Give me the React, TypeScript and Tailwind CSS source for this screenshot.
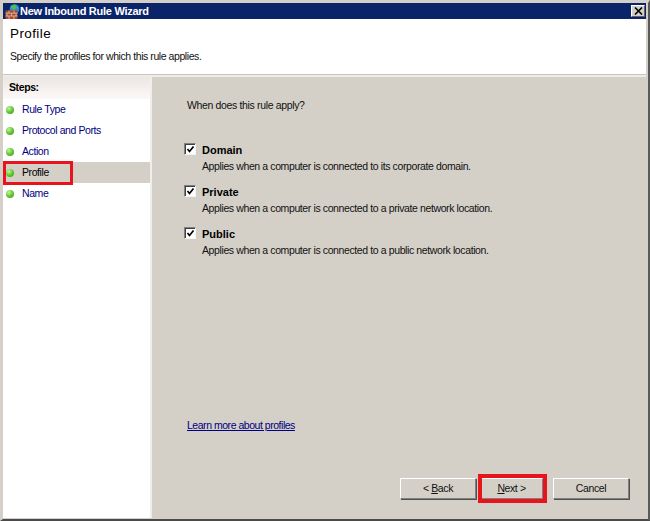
import type { ReactNode } from 'react'

const font = { fontFamily: '"Liberation Sans", Arial, sans-serif' }

const steps = ['Rule Type', 'Protocol and Ports', 'Action', 'Profile', 'Name']

const profiles = [
  { name: 'Domain', text: 'Applies when a computer is connected to its corporate domain.' },
  { name: 'Private', text: 'Applies when a computer is connected to a private network location.' },
  { name: 'Public', text: 'Applies when a computer is connected to a public network location.' },
]

function FirewallIcon() {
  return (
    <svg width="15" height="15" viewBox="0 0 15 15" className="shrink-0">
      <circle cx="9.5" cy="5" r="4.8" fill="#2f8fd8" />
      <path d="M6 2 L10 0.5 L12 3.5 L9 6 L6.5 4.5 Z" fill="#5cb84a" />
      <rect x="0.5" y="6.5" width="12" height="8.5" fill="#a5482c" />
      <path d="M0.5 9.2H12.5M0.5 12H12.5M4 6.5V9.2M9 6.5V9.2M2 9.2V12M6.5 9.2V12M11 9.2V12M4 12V15M9 12V15" stroke="#dcae96" strokeWidth="1" fill="none" />
    </svg>
  )
}

function Dot() {
  return <span className="size-[8px] shrink-0 rounded-full bg-[radial-gradient(circle_at_35%_30%,#c4f0a0,#5cc22c_55%,#3c9a1c)]" />
}

function Check() {
  return (
    <span className="flex size-[12px] shrink-0 items-center justify-center border border-t-[#808080] border-l-[#808080] border-r-[#f4f4f4] border-b-[#f4f4f4] bg-white shadow-[inset_1px_1px_0_#404040]">
      <svg width="9" height="9" viewBox="0 0 9 9">
        <path d="M1.5 4 L3.5 6.5 L7.5 1.5" stroke="#000" strokeWidth="1.7" fill="none" />
      </svg>
    </span>
  )
}

function WizButton({ children, className = '' }: { children: ReactNode; className?: string }) {
  return (
    <button className={`flex h-[21px] items-center justify-center border border-t-white border-l-white border-r-[#808080] border-b-[#808080] bg-[#d4d0c8] text-[10.5px] tracking-[-0.4px] text-[#111] shadow-[1px_1px_0_#505050] ${className}`}>
      {children}
    </button>
  )
}

export default function App() {
  return (
    <div style={font} className="relative h-[521px] w-[650px] overflow-hidden border-t-[3px] border-r-[2px] border-b-[2px] border-l-[3px] border-t-[#d4d0c8] border-r-[#5a5a5a] border-b-[#4a4a4a] border-l-[#d4d0c8] bg-[#d4d0c8]">
      <div className="flex h-full flex-col pr-[2px] pb-[1px]">
        {/* title bar */}
        <div className="flex h-[16px] shrink-0 items-center bg-[#0a246a] pr-[1px] pl-[2px]">
          <FirewallIcon />
          <span className="flex-1 text-[11px] leading-none font-bold tracking-[-0.27px] text-white">New Inbound Rule Wizard</span>
          <span className="flex h-[12px] w-[14px] items-center justify-center border border-t-white border-l-white border-r-[#606060] border-b-[#606060] bg-[#d4d0c8]">
            <svg width="9" height="8" viewBox="0 0 9 8">
              <path d="M1 0.5 L8 7.5 M8 0.5 L1 7.5" stroke="#000" strokeWidth="1.6" />
            </svg>
          </span>
        </div>

        {/* header */}
        <div className="flex h-[55px] shrink-0 flex-col bg-white pt-[7px] pl-[7px]">
          <h1 className="text-[13.5px] leading-[16px] tracking-[0.4px] text-black">Profile</h1>
          <p className="mt-[8px] text-[10.5px] leading-[13px] tracking-[-0.43px] text-[#111]">Specify the profiles for which this rule applies.</p>
        </div>
        <div className="h-[3px] shrink-0 border-t-[1px] border-[#c8c5be] bg-[#eeece8]" />

        <div className="flex min-h-0 flex-1 gap-[2px] bg-[#f0eeea]">
          {/* steps */}
          <aside className="flex w-[147px] shrink-0 flex-col bg-white">
            <div className="flex h-[22px] items-center bg-gradient-to-b from-[#ece6e2] to-[#fbf9f8] pl-[6px] text-[10.5px] font-bold tracking-[-0.4px] text-black">
              Steps:
            </div>
            <ul className="flex flex-col">
              {steps.map((step) => {
                const current = step === 'Profile'
                return (
                  <li key={step} className={`flex h-[21px] items-center gap-[8px] pl-[3px] ${current ? 'bg-[#d4d0c8] text-black' : 'text-[#000080]'}`}>
                    <Dot />
                    <span className="text-[10.5px] tracking-[-0.42px]">{step}</span>
                  </li>
                )
              })}
            </ul>
          </aside>

          {/* content */}
          <main className="flex min-w-0 flex-1 flex-col bg-[#d4d0c8] pt-[22px] pl-[32px]">
            <p className="ml-[3px] text-[10.5px] leading-[13px] tracking-[-0.35px] text-[#111]">When does this rule apply?</p>
            <div className="mt-[31px] flex flex-col gap-[12px]">
              {profiles.map((p) => (
                <div key={p.name} className="grid grid-cols-[12px_1fr] gap-x-[6px]">
                  <Check />
                  <span className="text-[11px] leading-[14px] font-bold text-black">{p.name}</span>
                  <span />
                  <span className="mt-[3px] text-[10.5px] leading-[13px] tracking-[-0.39px] text-[#111]">{p.text}</span>
                </div>
              ))}
            </div>
            <a className="mt-[162px] ml-[3px] text-[10.5px] leading-[13px] tracking-[-0.47px] text-[#000080] underline">Learn more about profiles</a>
            <div className="mt-[46px] flex justify-end pr-[17px]">
              <WizButton className="w-[76px]">
                &lt;&nbsp;<u>B</u>ack
              </WizButton>
              <WizButton className="ml-[4px] w-[63px]">
                <u>N</u>ext &gt;
              </WizButton>
              <WizButton className="ml-[10px] w-[76px]">Cancel</WizButton>
            </div>
          </main>
        </div>
      </div>

      {/* red annotations */}
      <div className="absolute top-[158px] left-[0px] h-[24px] w-[70px] border-[3px] border-[#e8141c]" />
      <div className="absolute top-[471px] left-[475px] h-[29px] w-[69px] border-[4px] border-[#e8141c]" />
    </div>
  )
}
